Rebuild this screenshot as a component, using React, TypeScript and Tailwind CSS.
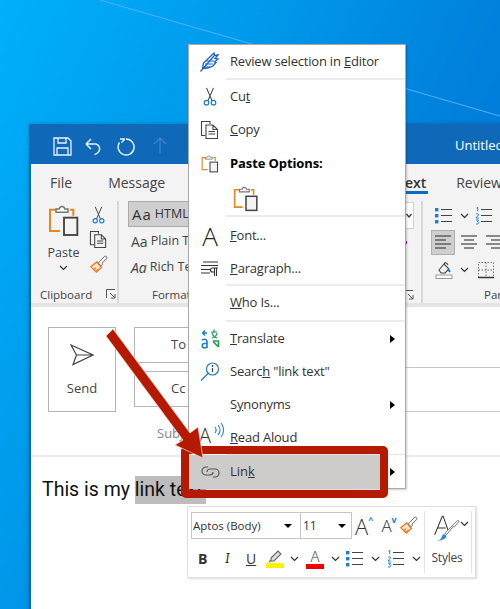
import React from "react";

const sans = { fontFamily: '"Open Sans","Noto Sans",sans-serif' };

function Chevron({ x = 0 }: { x?: number }) {
  return (
    <svg width="9" height="6" viewBox="0 0 9 6" style={{ marginLeft: x }} className="shrink-0">
      <path d="M1 1l3.500 3.500L8 1" fill="none" stroke="#333" strokeWidth="1.200" />
    </svg>
  );
}

function Feather() {
  return (
    <svg width="20" height="20" viewBox="0 0 20 20" fill="none" stroke="#1a62c8" strokeWidth="1.300">
      <path d="M.5 19.500L14 4M2.500 16.500L3.500 11 14 1l.5 2.500L18 3l-3 3.500 3 .5-3.500 3 1.500.5-3 3.500-5.500 2z" />
      <path d="M6 9h8M5 12h8M3.500 15h7" strokeWidth="1.100" />
    </svg>
  );
}
function Scissors({ s = 18 }: { s?: number }) {
  return (
    <svg width={s} height={s * 1.2} viewBox="0 0 18 22" fill="none">
      <path d="M5 1l6.500 15M13 1L6.500 16" stroke="#444" strokeWidth="1.200" />
      <circle cx="5" cy="18" r="2.600" stroke="#1a7fd0" strokeWidth="1.400" />
      <circle cx="13" cy="18" r="2.600" stroke="#1a7fd0" strokeWidth="1.400" />
    </svg>
  );
}
function CopyIcon({ s = 20 }: { s?: number }) {
  return (
    <svg width={s} height={s} viewBox="0 0 20 20" fill="none" stroke="#444" strokeWidth="1.100">
      <path d="M5.500 15.500H1.500V1.500H10V4" />
      <path d="M6 5h7l4.500 4.500v9H6zM13 5v4.500h4.500M8.500 11.500h6.500M8.500 14h6.500" />
    </svg>
  );
}
function PasteIcon({ s = 24 }: { s?: number }) {
  return (
    <svg width={s} height={s} viewBox="0 0 24 24" fill="none" className="shrink-0">
      <path d="M7 3.500H1.500v16H9" stroke="#e8871e" strokeWidth="1.500" />
      <path d="M16.500 3.500H19V8" stroke="#e8871e" strokeWidth="1.500" />
      <path d="M6 5.500V3h2.500c.3-2.400 3.700-2.400 4 0H15v2.500z" stroke="#777" strokeWidth="1.100" fill="#fff" />
      <rect x="12" y="9.500" width="10" height="13" fill="#f3f3f3" stroke="#444" strokeWidth="1.400" />
    </svg>
  );
}
function ParagraphIcon() {
  return (
    <svg width="20" height="16" viewBox="0 0 20 16" fill="none" stroke="#333" strokeWidth="1.100">
      <path d="M3 1h15M1 4.500h17M1 8.500h9M1 12h9" />
      <path d="M16.500 7v8M14.500 7v8M18 7h-5.500a2 2 0 000 4h2" />
    </svg>
  );
}
function TranslateIcon() {
  return (
    <svg width="20" height="20" viewBox="0 0 20 20" fill="none">
      <path d="M7 4H2.500M2.500 4L5 1.500M2.500 4L5 6.500" stroke="#1a7fd0" strokeWidth="1.600" />
      <path d="M11 3h6M14 .5V4M12 9c3-1 5-3 5-5M12 4c.5 2 2 4 5 5" stroke="#2a9a55" strokeWidth="1.200" />
      <path d="M13 12h5.500v6M18.500 18L13 12.500" stroke="#2a9a55" strokeWidth="1.700" />
      <path d="M2 11c3-1.500 5-.5 5 1.500v6.500M7 14.500H4.500a2.200 2.200 0 000 4.500c1.500 0 2.500-1 2.500-2" stroke="#1a7fd0" strokeWidth="1.600" />
    </svg>
  );
}
function SearchIcon() {
  return (
    <svg width="20" height="20" viewBox="0 0 20 20" fill="none">
      <circle cx="12.500" cy="7" r="6" stroke="#1a7fd0" strokeWidth="1.200" />
      <path d="M8 11.500L1 18.500" stroke="#1a7fd0" strokeWidth="1.300" />
      <path d="M12.500 6v4" stroke="#444" strokeWidth="1.300" />
      <circle cx="12.500" cy="4" r=".9" fill="#444" />
    </svg>
  );
}
function ReadAloudIcon() {
  return (
    <svg width="20" height="20" viewBox="0 0 20 20" fill="none">
      <path d="M9 5c1.500 2 1.500 4 0 6M12 3c2.500 3 2.500 7 0 10M15 1c3.500 4 3.500 10 0 14" stroke="#1a7fd0" strokeWidth="1.100" />
    </svg>
  );
}
function LinkIcon() {
  return (
    <svg width="20" height="14" viewBox="0 0 20 14" fill="none" stroke="#555" strokeWidth="1.200">
      <path d="M8 2H6a4 4 0 000 8h4a3 3 0 003-3" />
      <path d="M7 7a3 3 0 013-3h5a4 4 0 010 8h-2" />
    </svg>
  );
}
function Brush({ s = 22 }: { s?: number }) {
  return (
    <svg width={s} height={s} viewBox="0 0 22 22" fill="none" className="shrink-0">
      <path d="M2 13.500L9 8l5.500 6.500-6 5.500z" fill="#fbe3c5" stroke="#e8771e" strokeWidth="1.400" />
      <path d="M5 17.500l3-3M8 19l3-3" stroke="#e8771e" strokeWidth="1.200" />
      <path d="M11 9.500l3 3 2-2-1-1L20.500 4c.5-2-.5-3-2.500-2.500L13 7l-1 .5z" fill="#fff" stroke="#555" strokeWidth="1" />
    </svg>
  );
}
function BulletsIcon({ w = 18 }: { w?: number }) {
  return (
    <svg width={w} height={w} viewBox="0 0 18 18" fill="none" className="shrink-0">
      <rect x="0" y="1" width="3.400" height="3.400" fill="#1a7fd0" />
      <rect x="0" y="7" width="3.400" height="3.400" fill="#1a7fd0" />
      <rect x="0" y="13" width="3.400" height="3.400" fill="#1a7fd0" />
      <path d="M6 2.500h11M6 8.500h11M6 14.500h11" stroke="#444" strokeWidth="1.200" />
    </svg>
  );
}
function NumberedIcon({ w = 18 }: { w?: number }) {
  return (
    <svg width={w} height={w} viewBox="0 0 18 18" fill="none" className="shrink-0">
      <path d="M1.500 1l1.200-.8v4M1 7.500c.5-1 2.600-1 2.600.3S1 9.800 1 11h2.800M1 13h2.600l-1.200 1.500c2 0 2 3-1.400 2.500" stroke="#1a7fd0" strokeWidth="1" />
      <path d="M6 2.500h11M6 8.500h11M6 14.500h11" stroke="#444" strokeWidth="1.200" />
    </svg>
  );
}
function AlignIcon({ kind }: { kind: "l" | "c" | "r" }) {
  const rows = kind === "l" ? ["M0 1h16", "M0 5h11", "M0 9h16", "M0 13h11"] : kind === "c" ? ["M0 1h16", "M3 5h10", "M0 9h16", "M3 13h10"] : ["M0 1h16", "M5 5h11", "M0 9h16", "M5 13h11"];
  return (
    <svg width="16" height="14" viewBox="0 0 16 14" fill="none" stroke="#444" strokeWidth="1.200" className="shrink-0">
      {rows.map((d) => (
        <path key={d} d={d} />
      ))}
    </svg>
  );
}
function Launcher() {
  return (
    <svg width="10" height="10" viewBox="0 0 10 10" fill="none" stroke="#555" strokeWidth="1">
      <path d="M.5 9V.5H9M4 4l4.500 4.500M9 5v4H5" />
    </svg>
  );
}

function Item({
  icon,
  children,
  sub,
  h = 33,
  bold,
}: {
  icon?: React.ReactNode;
  children: React.ReactNode;
  sub?: boolean;
  h?: number;
  bold?: boolean;
}) {
  return (
    <div className="flex items-center text-[13px] text-[#333] shrink-0" style={{ height: h }}>
      <div className="w-[41px] flex justify-center shrink-0 pl-[1px]">{icon}</div>
      <div className={bold ? "font-bold text-black tracking-[-0.1px]" : "tracking-[-0.2px]"}>{children}</div>
      {sub && <div className="ml-auto mr-[10px] w-0 h-0 border-y-[4px] border-y-transparent border-l-[5px] border-l-black" />}
    </div>
  );
}
function Divider() {
  return <div className="h-[2px] ml-[37px] bg-[#ececec] shrink-0" />;
}

function ContextMenu() {
  return (
    <div className="absolute left-[188px] top-[44px] w-[218px] h-[445px] bg-white border border-[#a9a9a9] shadow-[1px_1px_2px_rgba(0,0,0,0.2)] flex flex-col">
      <Item h={33} icon={<Feather />}>
        Review selection in <u>E</u>ditor
      </Item>
      <Divider />
      <Item icon={<Scissors s={16} />}>
        Cu<u>t</u>
      </Item>
      <Item icon={<CopyIcon s={20} />}>
        <u>C</u>opy
      </Item>
      <Item bold h={36} icon={<PasteIcon s={18} />}>
        Paste Options:
      </Item>
      <div className="h-[33px] flex items-center pl-[44px] shrink-0">
        <PasteIcon s={26} />
      </div>
      <Divider />
      <Item h={37} icon={<span className="text-[26px] font-light leading-none text-[#222]">A</span>}>
        <u>F</u>ont...
      </Item>
      <Item h={30} icon={<ParagraphIcon />}>
        <u>P</u>aragraph...
      </Item>
      <Divider />
      <Item h={34}>
        <u>W</u>ho Is...
      </Item>
      <Divider />
      <Item icon={<TranslateIcon />} sub>
        <u>T</u>ranslate
      </Item>
      <Item icon={<SearchIcon />}>
        Searc<u>h</u> "link text"
      </Item>
      <Item sub>
        S<u>y</u>nonyms
      </Item>
      <Item
        icon={
          <span className="relative block w-[20px] h-[20px] mt-[-6px]">
            <span className="absolute left-[-1px] top-[-2px] text-[20px] font-light leading-[26px] text-[#333]">A</span>
            <span className="absolute left-[6px] top-[-3px]">
              <ReadAloudIcon />
            </span>
          </span>
        }
      >
        <u>R</u>ead Aloud
      </Item>
      <div className="h-[1px] ml-[37px] bg-[#e4e4e4] shrink-0" />
      <div className="flex h-[34px] items-center shrink-0">
        <div className="flex-1 flex items-center self-stretch bg-[#cdcccb] mr-[8px] text-[13px] text-[#333]">
          <div className="w-[41px] flex justify-center pl-[1px]">
            <LinkIcon />
          </div>
          <span>
            Lin<u>k</u>
          </span>
        </div>
        <div className="mr-[10px] w-0 h-0 border-y-[4px] border-y-transparent border-l-[5px] border-l-black" />
      </div>
    </div>
  );
}

function MiniToolbar() {
  return (
    <div className="absolute left-[187px] top-[506px] w-[289px] h-[72px] bg-white border border-[#e0e0e0] shadow-[1px_1px_2px_rgba(0,0,0,0.15)] flex text-[#333]">
      <div className="w-[236px] shrink-0 pl-[3px] pt-[5px] flex flex-col">
        <div className="flex items-center h-[27px]">
          <div className="w-[110px] h-[27px] border border-[#c6c6c6] flex items-center pl-[1px] text-[11.5px] shrink-0">
            Aptos (Body)
            <span className="ml-auto w-0 h-0 border-x-[4px] border-x-transparent border-t-[4px] border-t-black mr-[8px]" />
          </div>
          <div className="w-[51px] h-[27px] border border-l-0 border-[#c6c6c6] flex items-center pl-[2px] text-[12px] shrink-0">
            11
            <span className="ml-auto w-0 h-0 border-x-[4px] border-x-transparent border-t-[4px] border-t-black mr-[5px]" />
          </div>
          <div className="flex items-center ml-[3px]">
            <span className="text-[22px] font-light leading-none">A</span>
            <span className="text-[9px] leading-none text-[#1a7fd0] -mt-[12px] font-bold">^</span>
            <span className="text-[17px] font-light leading-none ml-[8px]">A</span>
            <span className="text-[9px] leading-none text-[#1a7fd0] -mt-[12px] font-bold">v</span>
            <span className="ml-[2px] flex">
              <Brush s={19} />
            </span>
          </div>
        </div>
        <div className="flex items-center h-[33px] mt-[3px] text-[14px]">
          <span className="w-[24px] pl-[7px] font-bold">B</span>
          <span className="w-[23px] pl-[10px] italic font-serif">I</span>
          <span className="w-[20px] pl-[8px] underline">U</span>
          <span className="ml-[8px] flex flex-col w-[18px] items-center shrink-0">
            <svg width="14" height="13" viewBox="0 0 14 13" fill="none">
              <path d="M3 8L10 1l3 3-7 7H3zM1 12l2-2" stroke="#666" strokeWidth="1.100" fill="#ddd" />
            </svg>
            <span className="w-[18px] h-[5px] bg-[#fff200]" />
          </span>
          <Chevron x={6} />
          <span className="ml-[7px] flex flex-col w-[18px] items-center leading-none shrink-0">
            <span className="text-[15px] h-[14px] font-light">A</span>
            <span className="w-[18px] h-[5px] bg-[#f00000] mt-[1px]" />
          </span>
          <Chevron x={7} />
          <span className="ml-[6px] flex"><BulletsIcon /></span>
          <Chevron x={7} />
          <span className="ml-[7px] flex"><NumberedIcon /></span>
          <Chevron x={7} />
        </div>
      </div>
      <div className="w-[1px] my-[4px] bg-[#e2e2e2] shrink-0" />
      <div className="flex-1 flex flex-col items-center pt-[6px]">
        <div className="flex items-start ml-[6px]">
          <svg width="27" height="30" viewBox="0 0 32 32" fill="none" className="shrink-0">
            <path d="M2 24L11 2h1l6 17M5 16h10" stroke="#333" strokeWidth="1.200" />
            <path d="M14 22l9-9 1 1-8 10z" fill="#fff" stroke="#666" />
            <path d="M23 13l6-6 2 1-6 7z" fill="#fff" stroke="#666" />
            <path d="M4 31c5 0 6-3 7-6 1-2 3-2 4-1l1 2c-1 3-6 5-12 5z" fill="#2d8ad8" />
          </svg>
          <span className="mt-[8px] flex"><Chevron /></span>
        </div>
        <span className="text-[12px] mt-[6px] text-[#444] tracking-[-0.2px] -ml-[2px]">Styles</span>
      </div>
      <div className="w-[1px] my-[4px] bg-[#e2e2e2] mr-[3px] shrink-0" />
    </div>
  );
}

function Ribbon() {
  return (
    <div className="h-[143px] bg-[#f3f3f3] border-b-[4px] border-[#e5e4e3] shrink-0 text-[#444] overflow-hidden">
      <div className="relative h-[37px] pt-[8px] flex text-[14px] whitespace-nowrap">
        <span className="ml-[19px] shrink-0">File</span>
        <span className="ml-[36px] shrink-0">Message</span>
        <span className="ml-[213px] shrink-0 font-semibold text-[#333] border-b-[3px] border-[#0f6cbd] h-[22px] w-[50px] text-right pr-[2px]">Text</span>
        <span className="ml-[28px] shrink-0">Review</span>
      </div>
      <div className="flex h-[102px]">
        <div className="w-[88px] shrink-0 border-r-2 border-[#d8d8d8] flex flex-col">
          <div className="flex h-[86px]">
            <div className="w-[59px] flex flex-col items-center pt-[4px] pl-[6px]">
              <PasteIcon s={32} />
              <span className="text-[12.5px] mt-[7px]">Paste</span>
              <span className="mt-[2px] flex"><Chevron /></span>
            </div>
            <div className="flex flex-col items-center gap-[6px] pt-[5px] -ml-[1px]">
              <Scissors s={15} />
              <CopyIcon s={19} />
              <Brush s={19} />
            </div>
          </div>
          <div className="flex items-center pl-[9px] text-[11.5px]">
            Clipboard
            <span className="ml-[14px]"><Launcher /></span>
          </div>
        </div>
        <div className="w-[304px] shrink-0 border-r-2 border-[#d8d8d8] flex flex-col relative">
          <div className="ml-[9px] w-[80px] h-[26px] bg-[#cfcfcf] border border-[#ababab] flex items-center pl-[3px] text-[12.5px] text-[#333] whitespace-nowrap">
            <span className="text-[15px] tracking-[1px] mr-[3px]">Aa</span> HTML Te
          </div>
          <div className="ml-[12px] mt-[2px] h-[24px] flex items-center text-[12.5px] whitespace-nowrap">
            <span className="text-[14px] mr-[3px]">Aa</span> Plain Te
          </div>
          <div className="ml-[12px] mt-[2px] h-[24px] flex items-center text-[12.5px] whitespace-nowrap">
            <span className="text-[14px] mr-[3px] italic">Aa</span> Rich Te
          </div>
          <div className="mt-auto ml-[33px] text-[11.5px]">Format Text</div>
          <div className="absolute right-[7px] bottom-[3px]"><Launcher /></div>
          <div className="absolute right-[7px] top-[1px] w-[9px] h-[27px] bg-white border border-l-0 border-[#d0d0d0] flex items-center justify-center">
            <svg width="6" height="5" viewBox="0 0 6 5"><path d="M.5 1l2.500 3L5.500 1" fill="none" stroke="#333" strokeWidth="1.200" /></svg>
          </div>
          <span className="absolute right-[14px] top-[40px] w-[3px] h-[3px] bg-[#a020a0]" />
        </div>
        <div className="w-[90px] shrink-0 flex flex-col pl-[8px]">
          <div className="flex items-center h-[26px] pl-[4px] pt-[4px]">
            <BulletsIcon />
            <Chevron x={7} />
            <span className="ml-[6px] flex"><NumberedIcon /></span>
          </div>
          <div className="flex items-center h-[26px] mt-[2px]">
            <span className="w-[24px] h-[25px] shrink-0 bg-[#cfcfcf] border border-[#b0b0b0] flex items-center justify-center"><AlignIcon kind="l" /></span>
            <span className="ml-[6px] flex"><AlignIcon kind="c" /></span>
            <span className="ml-[9px] flex"><AlignIcon kind="r" /></span>
          </div>
          <div className="flex items-center h-[26px] mt-[2px] pl-[4px]">
            <svg width="18" height="18" viewBox="0 0 18 18" fill="none" className="shrink-0">
              <path d="M4 9l5-6 5 5-4 4H6zM9 3c1-2 3-1 4 1" stroke="#444" strokeWidth="1.100" />
              <path d="M13 8l2 3" stroke="#1a7fd0" strokeWidth="2" />
              <rect x="1" y="14" width="16" height="3.500" stroke="#999" fill="#fff" />
            </svg>
            <Chevron x={7} />
            <svg width="18" height="18" viewBox="0 0 18 18" fill="none" className="ml-[8px] shrink-0">
              <path d="M1.500 1.500h15v15h-15zM9 1.500v15M1.500 9h15" stroke="#777" strokeDasharray="1.500 1.500" />
              <path d="M1 16.500h16" stroke="#333" strokeWidth="1.500" />
            </svg>
          </div>
          <div className="mt-auto pl-[53px] text-[11.5px] whitespace-nowrap">Paragraph</div>
        </div>
      </div>
    </div>
  );
}

function OutlookWindow() {
  return (
    <div className="absolute left-[29px] top-[124px] w-[480px] h-[485px] flex flex-col bg-white shadow-[0_0_4px_rgba(0,0,0,0.25)] border-l-2 border-[#0f66b5]">
      <div className="h-[40px] pt-[4px] bg-[#1068b8] shrink-0 flex items-center text-white whitespace-nowrap">
        <svg width="19" height="19" viewBox="0 0 19 19" fill="none" stroke="#e8f2fb" strokeWidth="1.300" className="ml-[22px] shrink-0">
          <path d="M1 1h14l3 3v14H1zM5 1v5h8V1M4 18v-7h11v7" />
        </svg>
        <svg width="18" height="18" viewBox="0 0 18 18" fill="none" stroke="#e8f2fb" strokeWidth="1.500" className="ml-[13px] shrink-0">
          <path d="M1 7h10a5 5 0 012 8.500L9.500 18M1 7l5-5M1 7l5 5" />
        </svg>
        <svg width="19" height="19" viewBox="0 0 19 19" fill="none" stroke="#e8f2fb" strokeWidth="1.400" className="ml-[14px] shrink-0">
          <path d="M9 2a8 8 0 11-6.500 3.500M8 2H3M8 2L4.500 5.500" />
        </svg>
        <svg width="14" height="18" viewBox="0 0 14 18" fill="none" stroke="#3d89cc" strokeWidth="1.200" className="ml-[17px] shrink-0">
          <path d="M7 17V1M1 7l6-6 6 6" />
        </svg>
        <span className="ml-[288px] text-[13px] shrink-0">Untitled</span>
      </div>
      <Ribbon />
      <div className="h-[150px] shrink-0 relative border-b-2 border-[#ececec] flex pl-[17px] pt-[20px] text-[#444]">
        <div className="w-[68px] h-[85px] border border-[#b5b5b5] flex flex-col items-center pt-[16px] shrink-0">
          <svg width="24" height="22" viewBox="0 0 24 22" fill="none" stroke="#444" strokeWidth="1.200" className="shrink-0">
            <path d="M1 1l22 10L3 20.500l3.500-9.500zM6.500 11H23" />
          </svg>
          <span className="text-[13px] mt-[13px]">Send</span>
        </div>
        <div className="ml-[18px] flex-1 flex flex-col">
          <div className="flex">
            <div className="w-[130px] h-[36px] border border-[#b5b5b5] pl-[36px] flex items-center text-[13px]">To</div>
          </div>
          <div className="flex mt-[8px]">
            <div className="w-[130px] h-[36px] border border-[#b5b5b5] pl-[36px] flex items-center text-[13px]">Cc</div>
          </div>
          <div className="pl-[23px] mt-[17px] text-[13px] text-[#888]">Subject</div>
        </div>
        <div className="absolute right-0 top-[60px] w-[104px] h-[1px] bg-[#c8c8c8]" />
        <div className="absolute right-0 top-[104px] w-[104px] h-[1px] bg-[#c8c8c8]" />
      </div>
      <div className="pl-[11px] pt-[19px] text-[19.5px] text-[#111] leading-[28px] whitespace-nowrap" style={{ fontFamily: "Roboto,sans-serif" }}>
        This is my <span className="bg-[#bdbdbd] inline-block pr-[3px]">link text</span>
      </div>
    </div>
  );
}

export default function App() {
  return (
    <div className="relative w-[500px] h-[609px] overflow-hidden bg-[linear-gradient(115deg,#00b0fa_0%,#0098ea_35%,#0080dc_65%,#006ed0_100%)]" style={sans}>
      <svg width="500" height="130" viewBox="0 0 500 130" className="absolute left-0 top-0">
        <path d="M100 0L500 116" stroke="#4db4f2" strokeWidth="1" fill="none" />
      </svg>
      <OutlookWindow />
      <ContextMenu />
      <MiniToolbar />
      <div className="absolute left-[181px] top-[446px] w-[207px] h-[52px] border-[8px] border-[#b51a00] rounded-[5px]" />
      <svg width="120" height="150" viewBox="0 0 120 150" className="absolute left-[100px] top-[325px]">
        <path d="M6 11L13 4L90 108L98 102L103 133L75 120L83 115Z" fill="#b51a00" stroke="#f3d8d0" strokeWidth="0.700" />
      </svg>
    </div>
  );
}
